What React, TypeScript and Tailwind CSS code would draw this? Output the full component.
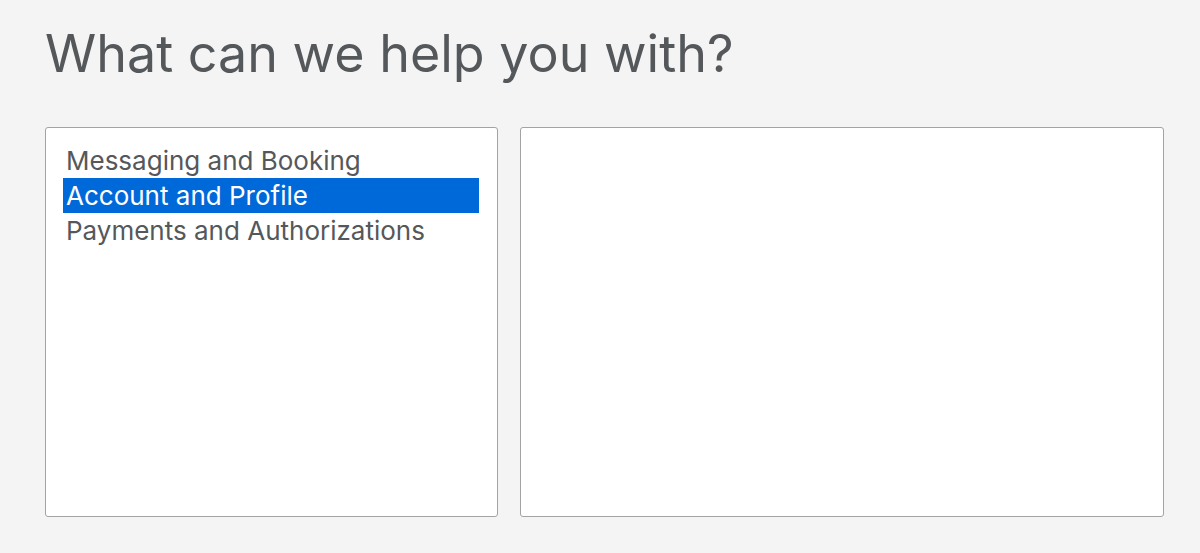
const topics = ['Messaging and Booking', 'Account and Profile', 'Payments and Authorizations'];

export default function App() {
  const selected = 1;
  return (
    <div className="min-h-[553px] w-full bg-[#f4f4f4] px-[45px] pt-[20px]" style={{ fontFamily: 'Inter, "Open Sans", sans-serif' }}>
      <h1 className="text-[52px] leading-[68px] text-[#55585b] font-normal">What can we help you with?</h1>
      <div className="mt-[39px] flex gap-[22px]">
        <div className="h-[390px] w-[453px] flex-none rounded-[3px] border border-[#a3a3a3] bg-white pl-[17px] pr-[18px] pt-[15px]">
          <ul>
            {topics.map((t, i) => (
              <li
                key={t}
                className={`h-[35px] pl-[3px] text-[26px] leading-[35px] ${i === selected ? 'bg-[#0069d9] text-white' : 'text-[#55585b]'}`}
              >
                {t}
              </li>
            ))}
          </ul>
        </div>
        <div className="h-[390px] w-[644px] flex-none rounded-[3px] border border-[#a3a3a3] bg-white" />
      </div>
    </div>
  );
}
